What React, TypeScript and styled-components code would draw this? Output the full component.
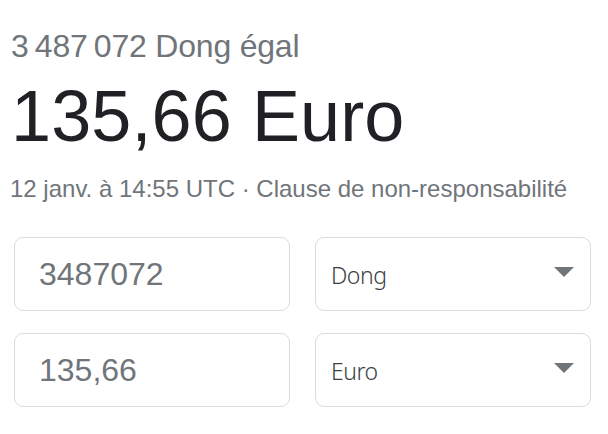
import * as React from 'react';
import styled, { createGlobalStyle } from 'styled-components';

const GlobalStyle = createGlobalStyle`
  html, body {
    margin: 0;
    padding: 0;
    background: #ffffff;
  }
  body {
    font-family: "Liberation Sans", Arial, sans-serif;
  }
`;

const Card = styled.div`
  width: 608px;
  height: 434px;
  box-sizing: border-box;
  padding: 26px 17px 0 10px;
  background: #fff;
`;

const Summary = styled.div`
  font-size: 32px;
  line-height: 40px;
  color: #70757a;
  padding-left: 1px;
  letter-spacing: -0.2px;
`;

const Result = styled.div`
  font-size: 72px;
  line-height: 80px;
  color: #202124;
  margin-top: 10px;
  margin-left: 1px;
  letter-spacing: 0.1px;
`;

const Meta = styled.div`
  font-size: 24px;
  line-height: 32px;
  color: #70757a;
  margin-top: 17px;
`;

const Form = styled.div`
  display: grid;
  grid-template-columns: 276px 276px;
  column-gap: 25px;
  row-gap: 22px;
  margin-top: 32px;
  padding-left: 4px;
`;

const Box = styled.div`
  box-sizing: border-box;
  height: 74px;
  border: 1px solid #dadce0;
  border-radius: 9px;
  display: flex;
  align-items: center;
  background: #fff;
`;

const AmountInput = styled.input`
  border: none;
  outline: none;
  background: transparent;
  width: 100%;
  padding: 0 0 0 24px;
  font-family: "Liberation Sans", Arial, sans-serif;
  font-size: 32px;
  color: #70757a;
`;

const Select = styled(Box)`
  padding: 0 16px 0 15px;
  justify-content: space-between;
`;

const SelectLabel = styled.span`
  font-family: "Noto Sans", "Liberation Sans", sans-serif;
  font-weight: 300;
  font-size: 23px;
  letter-spacing: -0.5px;
  color: #3c4043;
  padding-top: 2px;
`;

const Caret = styled.span`
  width: 0;
  height: 0;
  border-left: 10px solid transparent;
  border-right: 10px solid transparent;
  border-top: 10px solid #70757a;
  margin-top: -4px;
`;

type RowProps = { amount: string; currency: string };

const ConverterRow = ({ amount, currency }: RowProps) => (
  <>
    <Box>
      <AmountInput defaultValue={amount} />
    </Box>
    <Select>
      <SelectLabel>{currency}</SelectLabel>
      <Caret />
    </Select>
  </>
);

export default function App() {
  return (
    <>
      <GlobalStyle />
      <Card>
        <Summary>{'3\u2009487\u2009072 Dong égal'}</Summary>
        <Result>135,66 Euro</Result>
        <Meta>12 janv. à 14:55 UTC · Clause de non-responsabilité</Meta>
        <Form>
          <ConverterRow amount="3487072" currency="Dong" />
          <ConverterRow amount="135,66" currency="Euro" />
        </Form>
      </Card>
    </>
  );
}
